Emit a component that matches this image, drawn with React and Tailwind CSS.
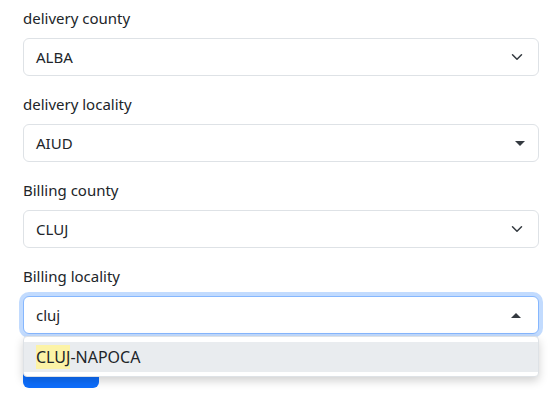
import React from 'react';

const Chevron = () => (
  <svg viewBox="0 0 16 16" className="h-[12px] w-[16px]" fill="none">
    <path d="m2 5 6 6 6-6" stroke="#343a40" strokeWidth="2" strokeLinecap="round" strokeLinejoin="round" />
  </svg>
);

const Caret = ({ up = false }) => (
  <svg viewBox="0 0 10 5" className="h-[5px] w-[10px]">
    <path d={up ? 'M0 5 5 0 10 5Z' : 'M0 0 10 0 5 5Z'} fill="#343a40" />
  </svg>
);

const Field = ({ label, value, icon }) => (
  <div className="mb-4">
    <div className="mb-2 leading-6">{label}</div>
    <div className="flex h-[38px] items-center justify-between rounded-md border border-[#dee2e6] bg-white pl-3 pr-[13px]">
      <span>{value}</span>
      {icon}
    </div>
  </div>
);

export default function App() {
  return (
    <div className="min-h-screen bg-white pt-[6px] pl-[23px] text-[15px] text-[#212529]" style={{ fontFamily: '"Noto Sans", sans-serif' }}>
      <div className="w-[516px]">
        <Field label="delivery county" value="ALBA" icon={<Chevron />} />
        <Field label="delivery locality" value="AIUD" icon={<Caret />} />
        <Field label="Billing county" value="CLUJ" icon={<Chevron />} />

        <div className="relative mb-4">
          <div className="mb-2 leading-6">Billing locality</div>
          <div className="flex h-[38px] items-center justify-between rounded-md border border-[#86b7fe] bg-white pl-3 pr-[17px] shadow-[0_0_0_4px_rgba(13,110,253,0.25)]">
            <span>cluj</span>
            <Caret up />
          </div>
          {/* lista de sugerencias */}
          <div className="absolute left-0 right-0 top-[72px] z-10 rounded-[4px] border border-[#dee2e6] bg-white pt-[5px] pb-[4px] text-[16px] shadow-[0_4px_10px_rgba(0,0,0,0.18)]">
            <div className="flex h-[30px] items-center bg-[#e9ecef] pl-3">
              <span className="bg-[#fcf3a7]">CLUJ</span>
              <span>-NAPOCA</span>
            </div>
          </div>
        </div>

        <div className="h-[38px] w-[76px] rounded-md bg-[#0d6efd]" />
      </div>
    </div>
  );
}
